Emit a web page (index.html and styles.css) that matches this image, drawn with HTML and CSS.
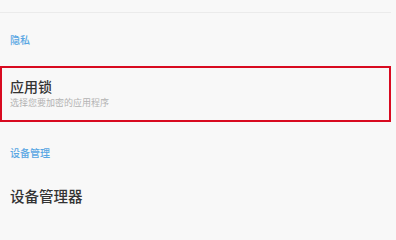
FILE: index.html
```html
<!DOCTYPE html>
<html lang="zh-CN">
<head>
<meta charset="utf-8">
<link rel="stylesheet" href="styles.css">
</head>
<body>
<div class="screen">
  <div class="top-item"></div>
  <div class="section-header first">隐私</div>
  <div class="item highlighted">
    <div class="item-title">应用锁</div>
    <div class="item-sub">选择您要加密的应用程序</div>
  </div>
  <div class="section-header second">设备管理</div>
  <div class="item plain">
    <div class="item-title big">设备管理器</div>
  </div>
</div>
</body>
</html>
```
FILE: styles.css
```css
html, body {
  margin: 0;
  padding: 0;
  background: #f8f8f8;
}
body {
  width: 396px;
  height: 206px;
  overflow: hidden;
  font-family: "Noto Sans CJK SC", "Noto Sans", sans-serif;
}
.screen {
  display: flex;
  flex-direction: column;
  padding-right: 5px;
}
.top-item {
  height: 12px;
  border-bottom: 1px solid #ebebeb;
}
.section-header {
  padding-left: 10px;
  font-size: 10px;
  line-height: 12px;
  font-weight: 500;
  color: #58a6e3;
}
.section-header.first {
  padding-top: 21px;
  padding-bottom: 20px;
}
.section-header.second {
  padding-top: 25px;
  padding-bottom: 28px;
}
.item {
  display: flex;
  flex-direction: column;
}
.item.highlighted {
  border: 2px solid #d80a20;
  padding: 10px 8px 12px;
  gap: 3px;
}
.item.plain {
  padding-left: 10px;
}
.item-title {
  font-size: 14px;
  line-height: 16px;
  font-weight: 500;
  color: #333333;
}
.item-title.big {
  font-size: 14.5px;
  line-height: 17px;
}
.item-sub {
  font-size: 9px;
  line-height: 11px;
  color: #b3b3b3;
}
```
